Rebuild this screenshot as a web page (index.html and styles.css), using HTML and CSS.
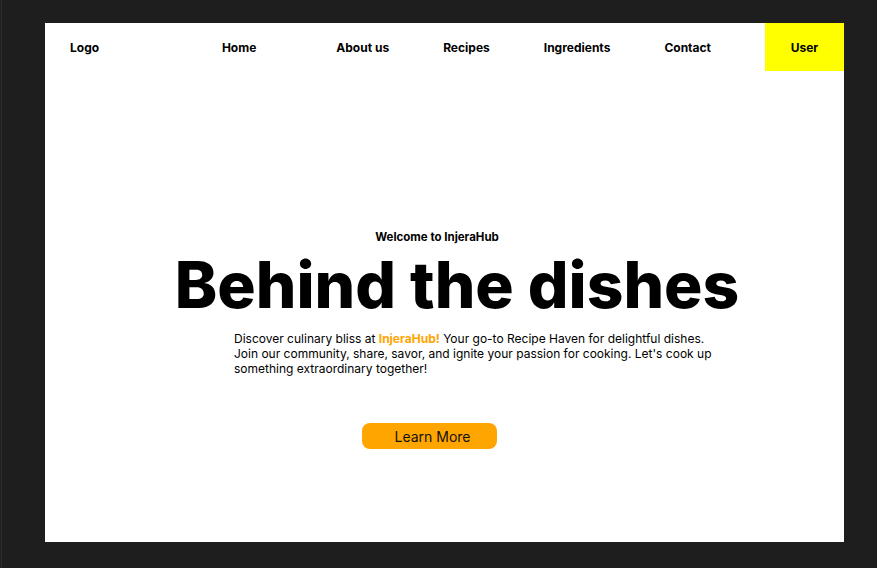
FILE: index.html
```html
<!DOCTYPE html>
<html lang="en">
<head>
<meta charset="utf-8">
<title>InjeraHub</title>
<link rel="stylesheet" href="styles.css">
</head>
<body>
<div class="frame">
  <header class="nav">
    <a class="logo" href="#">Logo</a>
    <nav class="links">
      <a class="link home" href="#">Home</a>
      <a class="link" href="#">About us</a>
      <a class="link" href="#">Recipes</a>
      <a class="link" href="#">Ingredients</a>
      <a class="link" href="#">Contact</a>
      <a class="link user" href="#">User</a>
    </nav>
  </header>
  <main class="hero">
    <p class="welcome">Welcome to InjeraHub</p>
    <h1 class="title">Behind the dishes</h1>
    <p class="intro">Discover culinary bliss at <span class="brand">InjeraHub!</span> Your go-to Recipe Haven for delightful dishes. Join our community, share, savor, and ignite your passion for cooking. Let's cook up something extraordinary together!</p>
    <a class="cta" href="#">Learn More</a>
  </main>
</div>
</body>
</html>
```
FILE: styles.css
```css
html {
  background: #1e1e1e;
}
body {
  margin: 0 0 0 1px;
  border-left: 1px solid #2c2c2c;
  padding: 23px 0 0 43px;
  min-height: 545px;
  font-family: Inter, "Noto Sans", sans-serif;
  color: #000;
}
.frame {
  width: 799px;
  height: 519px;
  background: #fff;
  display: flex;
  flex-direction: column;
}
.nav {
  display: flex;
  align-items: center;
  justify-content: space-between;
  height: 48px;
}
.nav a {
  color: #000;
  text-decoration: none;
  font-weight: 700;
  font-size: 12px;
}
.logo {
  padding-left: 25px;
}
.links {
  display: flex;
  height: 100%;
}
.link {
  display: flex;
  align-items: center;
  padding: 0 27px;
}
.home {
  padding-left: 25px;
  padding-right: 53px;
}
.user {
  margin-left: 27px;
  background: #ffff00;
  width: 79px;
  box-sizing: border-box;
  justify-content: center;
  padding: 0;
}
.hero {
  display: flex;
  flex-direction: column;
  align-items: center;
  padding-top: 159px;
}
.welcome {
  margin: 0 15px 0 0;
  font-size: 11.5px;
  font-weight: 700;
  line-height: 14px;
}
.title {
  margin: 2px 0 0 25px;
  font-size: 64px;
  font-weight: 800;
  line-height: 78px;
}
.intro {
  margin: 7px 0 0 59px;
  width: 480px;
  font-size: 12px;
  line-height: 15px;
}
.brand {
  color: #ffa500;
  font-weight: 700;
}
.cta {
  margin: 47px 30px 0 0;
  padding-left: 6px;
  width: 135px;
  height: 26px;
  box-sizing: border-box;
  border-radius: 8px;
  background: #ffa500;
  color: #111;
  text-decoration: none;
  font-size: 14px;
  display: flex;
  align-items: center;
  justify-content: center;
}
```
